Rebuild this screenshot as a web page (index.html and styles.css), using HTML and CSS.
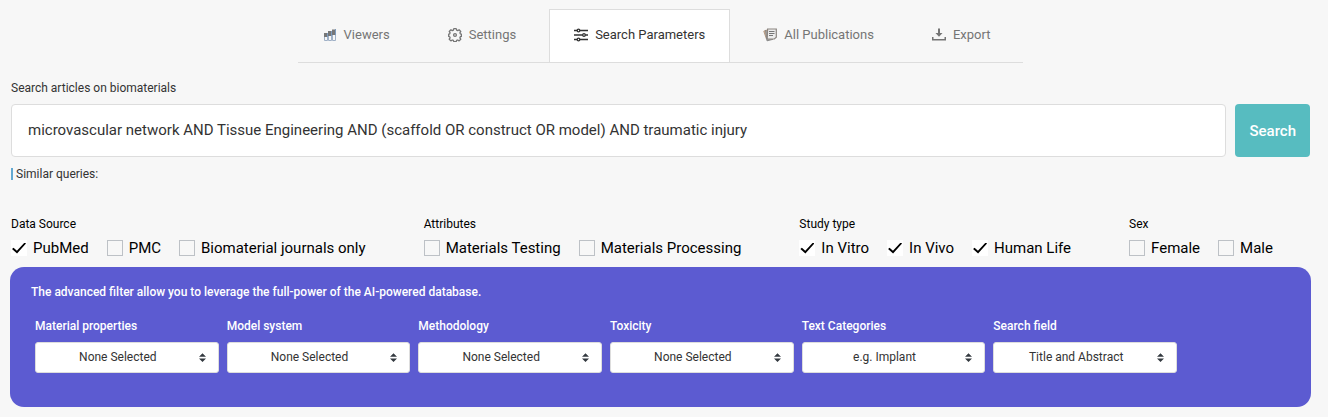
FILE: index.html
```html
<!DOCTYPE html>
<html lang="en">
<head>
<meta charset="utf-8">
<title>Search Parameters</title>
<link rel="stylesheet" href="styles.css">
</head>
<body>
<nav class="tabs">
  <a class="tab" href="#viewers"><svg class="icon" viewBox="0 0 14 14"><path fill="#f7f7f7" stroke="#9fb0c6" d="M1.500 8v4.500h3V8M5.500 7v5.500h3V7M9.500 6v6.500h3V6"/><path fill="#777" d="M1 5h3v4H1zM5 3h4v5H5zM9 1.500h4V7H9z"/><path fill="#7d9cc0" d="M4 5h1v4H4zM8 3h1v5H8zM12 1h1v6h-1z"/></svg>Viewers</a>
  <a class="tab" href="#settings"><svg class="icon" viewBox="0 0 14 14" fill="none" stroke="currentColor" stroke-width="1.300"><path stroke-linejoin="round" d="M5.800 .7h2.400l.4 1.500 1.100.45 1.400-.85 1.650 1.650-.85 1.400.4 1 1.100.3v2.300l-1.100.3-.4 1.050.85 1.400-1.650 1.650-1.400-.85-1.100.45-.4 1.200H5.800l-.4-1.200-1.100-.45-1.400.85L1.250 11.200l.85-1.400-.4-1.050-1-.3v-2.300l1-.3.4-1-.85-1.400L2.900 1.800l1.400.85 1.100-.45z"/><circle cx="7" cy="7" r="1.400"/></svg>Settings</a>
  <a class="tab tab-active" href="#parameters" aria-current="page"><svg class="icon" viewBox="0 0 14 14" fill="#fff" stroke="currentColor" stroke-width="1.300"><path d="M0 2.500h14M0 7h14M0 11.500h14"/><circle cx="4.500" cy="2.500" r="1.300"/><circle cx="10" cy="7" r="1.300"/><circle cx="4.500" cy="11.500" r="1.300"/></svg>Search Parameters</a>
  <a class="tab" href="#publications"><svg class="icon" viewBox="0 0 14 14"><path fill="#d0b49c" stroke="#b3977f" d="M.8 3.200 3.500 2v9z"/><path fill="#aaa" stroke="#888" d="M2.500 2 4 12.800l6-1.500"/><path fill="#ececec" stroke="#8b8580" stroke-width="1.200" d="M4.600 1h8.700v8.300l-2 1.700H4.200z"/><path fill="none" stroke="#777" d="M6 3.500h5.500M6 5.500h5.500M6 7.500h4"/></svg>All Publications</a>
  <a class="tab" href="#export"><svg class="icon" viewBox="0 0 14 14"><path fill="currentColor" d="M6 .5h2V5h2.500L7 8.800 3.500 5H6zM0 9h1.500v2h11V9H14v3.500H0z"/></svg>Export</a>
</nav>

<main>
  <form class="search">
    <label class="caption" for="query">Search articles on biomaterials</label>
    <div class="search-row">
      <input class="query" id="query" type="text" value="microvascular network AND Tissue Engineering AND (scaffold OR construct OR model) AND traumatic injury">
      <button class="search-button" type="submit">Search</button>
    </div>
    <p class="similar">Similar queries:</p>
  </form>

  <div class="filters">
    <fieldset class="group">
      <legend>Data Source</legend>
      <div class="options">
        <label class="option"><input type="checkbox" checked>PubMed</label>
        <label class="option"><input type="checkbox">PMC</label>
        <label class="option"><input type="checkbox">Biomaterial journals only</label>
      </div>
    </fieldset>
    <fieldset class="group">
      <legend>Attributes</legend>
      <div class="options">
        <label class="option"><input type="checkbox">Materials Testing</label>
        <label class="option"><input type="checkbox">Materials Processing</label>
      </div>
    </fieldset>
    <fieldset class="group">
      <legend>Study type</legend>
      <div class="options">
        <label class="option"><input type="checkbox" checked>In Vitro</label>
        <label class="option"><input type="checkbox" checked>In Vivo</label>
        <label class="option"><input type="checkbox" checked>Human Life</label>
      </div>
    </fieldset>
    <fieldset class="group">
      <legend>Sex</legend>
      <div class="options">
        <label class="option"><input type="checkbox">Female</label>
        <label class="option"><input type="checkbox">Male</label>
      </div>
    </fieldset>
  </div>

  <section class="advanced">
    <p class="advanced-note">The advanced filter allow you to leverage the full-power of the AI-powered database.</p>
    <div class="selects">
      <div class="field"><label for="material">Material properties</label><select id="material"><option>None Selected</option></select></div>
      <div class="field"><label for="model">Model system</label><select id="model"><option>None Selected</option></select></div>
      <div class="field"><label for="method">Methodology</label><select id="method"><option>None Selected</option></select></div>
      <div class="field"><label for="toxicity">Toxicity</label><select id="toxicity"><option>None Selected</option></select></div>
      <div class="field"><label for="categories">Text Categories</label><select id="categories"><option>e.g. Implant</option></select></div>
      <div class="field"><label for="field">Search field</label><select id="field"><option>Title and Abstract</option></select></div>
    </div>
  </section>
</main>
</body>
</html>
```
FILE: styles.css
```css
* {
  box-sizing: border-box;
}

body {
  margin: 0;
  padding: 9px 17px 10px 10px;
  background: #f7f7f7;
  color: #333;
  font: 12px/16px Roboto, sans-serif;
}

.tabs {
  display: flex;
  gap: 8px;
  width: fit-content;
  margin: 0 auto 17px;
  padding-right: 8px;
  border-bottom: 1px solid #ddd;
}

.tab {
  display: flex;
  align-items: center;
  gap: 7px;
  height: 53px;
  padding: 0 24px 2px;
  border: 1px solid transparent;
  border-bottom: 0;
  color: #757575;
  font-size: 13px;
  text-decoration: none;
}

.tab-active {
  background: #fff;
  border-color: #ddd;
  color: #333;
}

.icon {
  width: 14px;
  height: 14px;
}

.search {
  padding: 0 1px;
}

.caption {
  display: block;
  margin-bottom: 8px;
}

.search-row {
  display: flex;
  gap: 9px;
}

.query {
  flex: 1;
  min-width: 0;
  height: 53px;
  padding: 0 16px 2px;
  border: 1px solid #ddd;
  border-radius: 4px;
  background: #fff;
  color: #333;
  font: 15px Roboto, sans-serif;
}

.search-button {
  padding: 0 14px;
  border: 0;
  border-radius: 4px;
  background: #57bcc0;
  color: #fff;
  font: 500 15px Roboto, sans-serif;
}

.similar {
  width: fit-content;
  margin: 9px 0 0;
  padding-left: 5px;
  background: linear-gradient(#62a8d1, #62a8d1) left center / 2px 12px no-repeat;
}

.filters {
  display: flex;
  flex-wrap: wrap;
  gap: 16px 58px;
  padding: 34px 1px 0;
  color: #000;
}

.group {
  margin: 0;
  padding: 0;
  border: 0;
  min-width: 0;
}

.group legend {
  padding: 0;
}

.options {
  display: flex;
  gap: 18px;
  padding: 6px 0 9px;
}

.option {
  display: flex;
  align-items: center;
  gap: 6px;
  font-size: 15px;
  line-height: 20px;
}

.option input {
  appearance: none;
  width: 16px;
  height: 16px;
  margin: 0;
  border: 1px solid #bdc1c6;
  display: grid;
  place-items: center;
}

.option input:checked {
  border-color: #fff;
  background: #fff;
}

.option input:checked::before {
  content: "";
  width: 14px;
  height: 11px;
  background: #000;
  clip-path: polygon(0 58%, 11% 47%, 35% 75%, 90% 0, 100% 8%, 36% 100%);
}

.advanced {
  padding: 17px 134px 34px 25px;
  border-radius: 14px;
  background: #5c5bd1;
  color: #fff;
  font-weight: 500;
}

.advanced-note {
  margin: 0 0 18px -4px;
}

.selects {
  display: grid;
  grid-template-columns: repeat(6, 1fr);
  gap: 8px;
}

.field label {
  display: block;
  margin-bottom: 8px;
}

.field select {
  appearance: none;
  width: 100%;
  height: 31px;
  padding: 0 26px 2px 8px;
  border: 1px solid #ddd;
  border-radius: 3px;
  background: #fff url("data:image/svg+xml,%3Csvg xmlns='http://www.w3.org/2000/svg' viewBox='0 0 4 5'%3E%3Cpath fill='%23343a40' d='M2 0L0 2h4zm0 5L0 3h4z'/%3E%3C/svg%3E") no-repeat right 12px center / 7px 9px;
  color: #333;
  font: 12px Roboto, sans-serif;
  text-align: center;
  text-align-last: center;
}
```
